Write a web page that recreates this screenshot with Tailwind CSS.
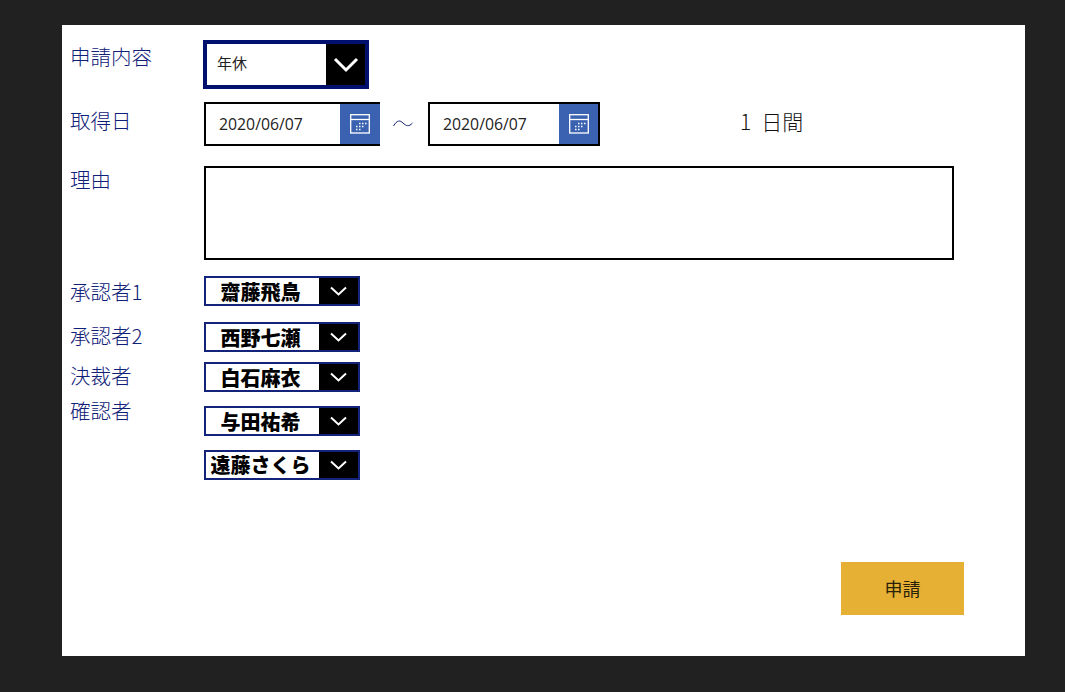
<!DOCTYPE html>
<html lang="ja">
<head>
  <meta charset="UTF-8">
  <title>申請</title>
  <script src="https://cdn.jsdelivr.net/npm/@tailwindcss/browser@4"></script>
</head>
<body class="bg-[#212121] h-[692px] overflow-hidden font-['Noto_Sans_CJK_JP','Noto_Sans',sans-serif]">
  <div class="ml-[62px] mt-[25px] w-[963px] h-[631px] bg-white flex flex-col absolute top-0 left-0">
    <div class="flex">
      <!-- labels -->
      <div class="w-[142px] pl-[8px] flex flex-col text-[20.5px] leading-[28px] font-light text-[#0f2078]">
        <div class="mt-[17px]">申請内容</div>
        <div class="mt-[36px]">取得日</div>
        <div class="mt-[31px]">理由</div>
        <div class="mt-[84px]">承認者1</div>
        <div class="mt-[16px]">承認者2</div>
        <div class="mt-[12px]">決裁者</div>
        <div class="mt-[7px]">確認者</div>
      </div>
      <!-- controls -->
      <div class="flex flex-col flex-1">
        <div class="mt-[15px] -ml-px w-[166px] h-[49px] border-4 border-[#00106e] flex">
          <div class="flex-1 pl-[10px] pb-[2px] flex items-center text-[15px] text-[#222]">年休</div>
          <div class="w-[39px] bg-black flex items-center justify-center">
            <svg width="26" height="16" viewBox="0 0 26 16" fill="none" stroke="white" stroke-width="3"><path d="M2 2l11 11L24 2"/></svg>
          </div>
        </div>
        <div class="mt-[13px] flex items-center">
          <div class="w-[176px] h-[44px] border-y-2 border-l-2 border-black flex">
            <div class="flex-1 pl-[13px] pt-[2px] flex items-center text-[15.800px] text-[#222] font-['Open_Sans',sans-serif]">2020/06/07</div>
            <div class="w-[40px] bg-[#3a62b1] flex items-center justify-center">
              <svg width="20" height="20" viewBox="0 0 20 20" fill="none" stroke="white" stroke-width="1.3"><rect x=".7" y=".7" width="18.600" height="18.300"/><path d="M1 5.500h18"/><path d="M9 9.500h1.500M12 9.500h1.500M15 9.500h1.500M6 12.500h1.500M9 12.500h1.500M12 12.500h1.500M6 15.500h1.500M9 15.500h1.500" stroke-width="1.600"/></svg>
            </div>
          </div>
          <div class="w-[48px] pl-[13px]">
            <svg width="20" height="10" viewBox="0 0 20 10" fill="none" stroke="#0f2078"><path d="M.5 7C4 1 7 1 10 4s6 4 9.500 0"/></svg>
          </div>
          <div class="w-[172px] h-[44px] border-2 border-black flex">
            <div class="flex-1 pl-[13px] pt-[2px] flex items-center text-[15.800px] text-[#222] font-['Open_Sans',sans-serif]">2020/06/07</div>
            <div class="w-[39px] bg-[#3a62b1] flex items-center justify-center">
              <svg width="20" height="20" viewBox="0 0 20 20" fill="none" stroke="white" stroke-width="1.3"><rect x=".7" y=".7" width="18.600" height="18.300"/><path d="M1 5.500h18"/><path d="M9 9.500h1.500M12 9.500h1.500M15 9.500h1.500M6 12.500h1.500M9 12.500h1.500M12 12.500h1.500M6 15.500h1.500M9 15.500h1.500" stroke-width="1.600"/></svg>
            </div>
          </div>
          <div class="ml-[140px] text-[21px] text-[#111] flex gap-[10px] -mt-[4px] font-light"><span>1</span><span>日間</span></div>
        </div>
        <div class="mt-[20px] w-[750px] h-[94px] border-2 border-black"></div>
        <div class="mt-[16px] flex flex-col">
          <div class="w-[156px] h-[30px] border-2 border-[#14237a] flex">
            <div class="flex-1 flex items-center justify-center text-[20px] leading-none font-black text-black pr-[4px] pt-[2px]">齋藤飛鳥</div>
            <div class="w-[39px] bg-black flex items-center justify-center"><svg width="17" height="10" viewBox="0 0 17 10" fill="none" stroke="white" stroke-width="2"><path d="M1 1.500l7.500 7 7.500-7"/></svg></div>
          </div>
          <div class="mt-[16px] w-[156px] h-[30px] border-2 border-[#14237a] flex">
            <div class="flex-1 flex items-center justify-center text-[20px] leading-none font-black text-black pr-[4px] pt-[2px]">西野七瀬</div>
            <div class="w-[39px] bg-black flex items-center justify-center"><svg width="17" height="10" viewBox="0 0 17 10" fill="none" stroke="white" stroke-width="2"><path d="M1 1.500l7.500 7 7.500-7"/></svg></div>
          </div>
          <div class="mt-[10px] w-[156px] h-[30px] border-2 border-[#14237a] flex">
            <div class="flex-1 flex items-center justify-center text-[20px] leading-none font-black text-black pr-[4px] pt-[2px]">白石麻衣</div>
            <div class="w-[39px] bg-black flex items-center justify-center"><svg width="17" height="10" viewBox="0 0 17 10" fill="none" stroke="white" stroke-width="2"><path d="M1 1.500l7.500 7 7.500-7"/></svg></div>
          </div>
          <div class="mt-[14px] w-[156px] h-[30px] border-2 border-[#14237a] flex">
            <div class="flex-1 flex items-center justify-center text-[20px] leading-none font-black text-black pr-[4px] pt-[2px]">与田祐希</div>
            <div class="w-[39px] bg-black flex items-center justify-center"><svg width="17" height="10" viewBox="0 0 17 10" fill="none" stroke="white" stroke-width="2"><path d="M1 1.500l7.500 7 7.500-7"/></svg></div>
          </div>
          <div class="mt-[14px] w-[156px] h-[30px] border-2 border-[#14237a] flex">
            <div class="flex-1 flex items-center justify-center text-[20px] leading-none font-black text-black pr-[4px]">遠藤さくら</div>
            <div class="w-[39px] bg-black flex items-center justify-center"><svg width="17" height="10" viewBox="0 0 17 10" fill="none" stroke="white" stroke-width="2"><path d="M1 1.500l7.500 7 7.500-7"/></svg></div>
          </div>
        </div>
      </div>
    </div>
    <div class="mt-[82px] ml-[779px] w-[123px] h-[53px] bg-[#e6b035] flex items-center justify-center text-[18px] text-[#2a2208]">申請</div>
  </div>
</body>
</html>
